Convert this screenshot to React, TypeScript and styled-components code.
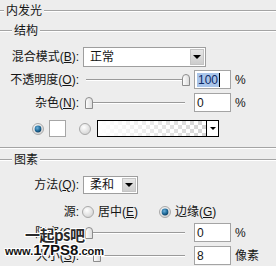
import React from "react";
import styled, { createGlobalStyle } from "styled-components";

const GlobalStyle = createGlobalStyle`
  html, body {
    margin: 0;
    padding: 0;
    background: #ededed;
  }
  body {
    font-family: "Liberation Sans", "Noto Sans CJK SC", sans-serif;
    font-size: 12px;
    color: #151515;
  }
`;

const Panel = styled.div`
  position: relative;
  width: 276px;
  height: 266px;
  overflow: hidden;
  display: flex;
  flex-direction: column;
  background: #ededed;
`;

const Row = styled.div<{ $top?: number; $h: number }>`
  display: flex;
  align-items: center;
  flex: none;
  margin-top: ${p => p.$top ?? 0}px;
  height: ${p => p.$h}px;
`;

const Etched = styled.div<{ $w?: number }>`
  height: 0;
  border-top: 1px solid #a4a4a4;
  border-bottom: 1px solid #ffffff;
  ${p => (p.$w ? `width: ${p.$w}px; flex: none;` : `flex: 1;`)}
`;

const HeaderText = styled.span`
  margin: 0 2px;
  line-height: 1;
  white-space: nowrap;
`;

const Label = styled.label`
  width: 79px;
  flex: none;
  text-align: right;
  white-space: nowrap;
  line-height: 1;
`;

const Key = styled.span`
  text-decoration: underline;
`;

const Select = styled.div<{ $w: number; $h: number }>`
  box-sizing: border-box;
  width: ${p => p.$w}px;
  height: ${p => p.$h}px;
  margin-left: 4px;
  padding: 1px;
  display: flex;
  align-items: stretch;
  background: #fff;
  border: 1px solid #9e9e9e;
`;

const SelectValue = styled.span`
  flex: 1;
  display: flex;
  align-items: center;
  padding-left: 5px;
  line-height: 1;
`;

const DropButton = styled.div`
  width: 14px;
  box-sizing: border-box;
  display: flex;
  align-items: center;
  justify-content: center;
  background: linear-gradient(#e6e6e6, #cdcdcd);
  border: 1px solid #c4c4c4;
`;

const Arrow = styled.span<{ $size: number }>`
  width: 0;
  height: 0;
  border-left: ${p => p.$size}px solid transparent;
  border-right: ${p => p.$size}px solid transparent;
  border-top: ${p => p.$size}px solid #000;
`;

const SliderWrap = styled.div`
  position: relative;
  width: 104px;
  height: 16px;
  margin-left: 5px;
  flex: none;
`;

const Track = styled.div`
  position: absolute;
  left: 2px;
  width: 99px;
  top: 7px;
  height: 0;
  border-top: 1px solid #9a9a9a;
  border-bottom: 1px solid #ffffff;
`;

const Thumb = styled.svg`
  position: absolute;
  top: 2px;
`;

const NumBox = styled.div`
  box-sizing: border-box;
  width: 37px;
  height: 19px;
  margin-left: 6px;
  padding-left: 2px;
  display: flex;
  align-items: center;
  background: #fff;
  border: 1px solid #a4a4a4;
  line-height: 1;
`;

const Selected = styled.span`
  background: #a9c5ea;
  color: #0e2a66;
  padding: 1px 1px;
  border-right: 1px solid #000;
`;

const Unit = styled.span`
  margin-left: 4px;
  line-height: 1;
  white-space: nowrap;
`;

const RadioSvg = styled.svg<{ $ml?: number }>`
  flex: none;
  margin-left: ${p => p.$ml ?? 0}px;
`;

const Swatch = styled.div`
  box-sizing: border-box;
  width: 17px;
  height: 17px;
  margin-left: 5px;
  background: #fff;
  border: 1px solid #a6a6a6;
`;

const GradientBox = styled.div`
  box-sizing: border-box;
  width: 122px;
  height: 17px;
  margin-left: 6px;
  display: flex;
  border: 1px solid #000;
`;

const GradientFill = styled.div`
  flex: 1;
  background-image: linear-gradient(to right, #ffffff 0%, rgba(255, 255, 255, 0) 100%),
    repeating-conic-gradient(#d4d4d4 0 25%, #ffffff 0 50%);
  background-size: auto, 8px 8px;
`;

const GradientDrop = styled.div`
  width: 11px;
  display: flex;
  align-items: center;
  justify-content: center;
  background: #fff;
  border-left: 1px solid #000;
`;

const Option = styled.div<{ $w?: number }>`
  display: flex;
  align-items: center;
  ${p => (p.$w ? `width: ${p.$w}px;` : "")}
  flex: none;
  line-height: 1;
  white-space: nowrap;
`;

const OptionText = styled.span`
  margin-left: 4px;
`;

const Watermark = styled.div`
  position: absolute;
  left: 5px;
  top: 226px;
  display: flex;
  flex-direction: column;
  pointer-events: none;
  text-shadow: 1px 0 0 #fff, -1px 0 0 #fff, 0 1px 0 #fff, 0 -1px 0 #fff,
    1px 1px 0 #fff, -1px -1px 0 #fff, 1px -1px 0 #fff, -1px 1px 0 #fff;
`;

const WmTop = styled.div`
  margin-left: 20px;
  font-family: "Noto Sans CJK SC", sans-serif;
  font-size: 15px;
  font-weight: 700;
  color: #2a2a2a;
  line-height: 17px;
  letter-spacing: -0.5px;
`;

const WmBottom = styled.div`
  font-family: "Liberation Sans", sans-serif;
  font-weight: 700;
  color: #111;
  line-height: 14px;
  white-space: nowrap;
`;

const WmSmall = styled.span`
  font-size: 11px;
`;

const WmBig = styled.span`
  font-size: 15px;
`;

const Radio = ({ checked, ml }: { checked?: boolean; ml?: number }) => (
  <RadioSvg $ml={ml} width="12" height="12" viewBox="0 0 12 12">
    <defs>
      <radialGradient id="rbg" cx="40%" cy="35%" r="70%">
        <stop offset="0%" stopColor="#ffffff" />
        <stop offset="100%" stopColor="#d2d2d2" />
      </radialGradient>
      <radialGradient id="rdot" cx="40%" cy="35%" r="70%">
        <stop offset="0%" stopColor="#6fb2dc" />
        <stop offset="60%" stopColor="#1f6a99" />
        <stop offset="100%" stopColor="#0c3a5c" />
      </radialGradient>
    </defs>
    <circle cx="6" cy="6" r="5.5" fill="url(#rbg)" stroke="#a9a9a9" />
    {checked && <circle cx="6" cy="6" r="3.4" fill="url(#rdot)" />}
  </RadioSvg>
);

const Slider = ({ value }: { value: number }) => (
  <SliderWrap>
    <Track />
    <Thumb style={{ left: 1 + (value / 100) * 97 }} width="8" height="12" viewBox="0 0 8 12">
      <defs>
        <linearGradient id="tg" x1="0" y1="0" x2="1" y2="0">
          <stop offset="0%" stopColor="#ffffff" />
          <stop offset="100%" stopColor="#dadada" />
        </linearGradient>
      </defs>
      <path d="M0.5 4 Q0.5 0.5 4 0.5 Q7.5 0.5 7.5 4 V11.5 H0.5 Z" fill="url(#tg)" stroke="#8c8c8c" />
    </Thumb>
  </SliderWrap>
);

const GroupHeader = ({ text }: { text: string }) => (
  <>
    <Etched $w={12} />
    <HeaderText>{text}</HeaderText>
    <Etched />
  </>
);

export default function App() {
  return (
    <>
      <GlobalStyle />
      <Panel>
        <Row $h={21}>
          <Etched $w={4} />
          <HeaderText>内发光</HeaderText>
          <Etched />
        </Row>
        <Row $h={19}>
          <GroupHeader text="结构" />
        </Row>

        <Row $top={7} $h={20}>
          <Label>
            混合模式(<Key>B</Key>):
          </Label>
          <Select $w={123} $h={20}>
            <SelectValue>正常</SelectValue>
            <DropButton>
              <Arrow $size={4} />
            </DropButton>
          </Select>
        </Row>

        <Row $top={3} $h={19}>
          <Label>
            不透明度(<Key>O</Key>):
          </Label>
          <Slider value={100} />
          <NumBox>
            <Selected>100</Selected>
          </NumBox>
          <Unit>%</Unit>
        </Row>

        <Row $top={4} $h={19}>
          <Label>
            杂色(<Key>N</Key>):
          </Label>
          <Slider value={0} />
          <NumBox>0</NumBox>
          <Unit>%</Unit>
        </Row>

        <Row $top={8} $h={17}>
          <Radio checked ml={32} />
          <Swatch />
          <Radio ml={13} />
          <GradientBox>
            <GradientFill />
            <GradientDrop>
              <Arrow $size={3} />
            </GradientDrop>
          </GradientBox>
        </Row>

        <Row $top={10} $h={2}>
          <Etched />
        </Row>

        <Row $h={22}>
          <GroupHeader text="图素" />
        </Row>

        <Row $top={5} $h={18}>
          <Label>
            方法(<Key>Q</Key>):
          </Label>
          <Select $w={55} $h={18}>
            <SelectValue>柔和</SelectValue>
            <DropButton>
              <Arrow $size={4} />
            </DropButton>
          </Select>
        </Row>

        <Row $top={10} $h={15}>
          <Label>源:</Label>
          <Option $w={77} style={{ marginLeft: 3 }}>
            <Radio />
            <OptionText>
              居中(<Key>E</Key>)
            </OptionText>
          </Option>
          <Option>
            <Radio checked />
            <OptionText>
              边缘(<Key>G</Key>)
            </OptionText>
          </Option>
        </Row>

        <Row $top={4} $h={19}>
          <Label>
            阻塞(<Key>C</Key>):
          </Label>
          <Slider value={0} />
          <NumBox>0</NumBox>
          <Unit>%</Unit>
        </Row>

        <Row $top={4} $h={19}>
          <Label>
            大小(<Key>S</Key>):
          </Label>
          <Slider value={8} />
          <NumBox>8</NumBox>
          <Unit>像素</Unit>
        </Row>

        <Watermark>
          <WmTop>一起ps吧</WmTop>
          <WmBottom>
            <WmSmall>www.</WmSmall>
            <WmBig>17PS8</WmBig>
            <WmSmall>.com</WmSmall>
          </WmBottom>
        </Watermark>
      </Panel>
    </>
  );
}
